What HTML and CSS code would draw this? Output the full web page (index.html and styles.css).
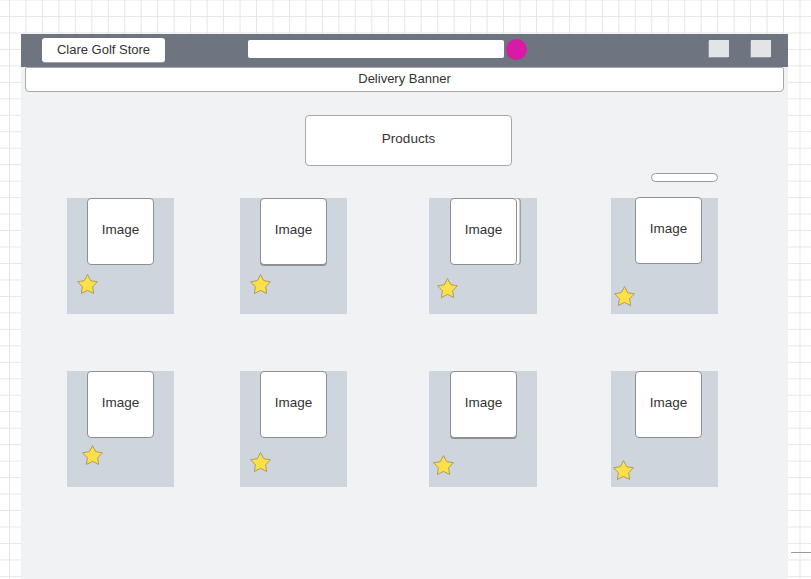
FILE: index.html
```html
<!DOCTYPE html>
<html lang="en">
<head>
<meta charset="utf-8">
<title>Clare Golf Store</title>
<link rel="stylesheet" href="styles.css">
</head>
<body>
<div class="frame">
  <header class="header">
    <div class="store">Clare Golf Store</div>
    <div class="search"></div>
    <div class="dot"></div>
    <div class="sq sq1"></div>
    <div class="sq sq2"></div>
  </header>
  <div class="banner">Delivery Banner</div>
  <div class="products">Products</div>
  <div class="pill"></div>

  <div class="row row1">
    <div class="card c1">
      <div class="img i1">Image</div>
      <svg class="star s11" viewBox="0 0 24 24"><polygon points="12,2.5 15.06,8.29 21.51,9.41 16.95,14.11 17.88,20.59 12,17.7 6.12,20.59 7.05,14.11 2.49,9.41 8.94,8.29"/></svg>
    </div>
    <div class="card c2">
      <div class="img i2 shade">Image</div>
      <svg class="star s12" viewBox="0 0 24 24"><polygon points="12,2.5 15.06,8.29 21.51,9.41 16.95,14.11 17.88,20.59 12,17.7 6.12,20.59 7.05,14.11 2.49,9.41 8.94,8.29"/></svg>
    </div>
    <div class="card c3">
      <div class="img i3 stacked">Image</div>
      <svg class="star s13" viewBox="0 0 24 24"><polygon points="12,2.5 15.06,8.29 21.51,9.41 16.95,14.11 17.88,20.59 12,17.7 6.12,20.59 7.05,14.11 2.49,9.41 8.94,8.29"/></svg>
    </div>
    <div class="card c4">
      <div class="img i4 up">Image</div>
      <svg class="star s14" viewBox="0 0 24 24"><polygon points="12,2.5 15.06,8.29 21.51,9.41 16.95,14.11 17.88,20.59 12,17.7 6.12,20.59 7.05,14.11 2.49,9.41 8.94,8.29"/></svg>
    </div>
  </div>

  <div class="row row2">
    <div class="card c1">
      <div class="img i1">Image</div>
      <svg class="star s21" viewBox="0 0 24 24"><polygon points="12,2.5 15.06,8.29 21.51,9.41 16.95,14.11 17.88,20.59 12,17.7 6.12,20.59 7.05,14.11 2.49,9.41 8.94,8.29"/></svg>
    </div>
    <div class="card c2">
      <div class="img i2">Image</div>
      <svg class="star s22" viewBox="0 0 24 24"><polygon points="12,2.5 15.06,8.29 21.51,9.41 16.95,14.11 17.88,20.59 12,17.7 6.12,20.59 7.05,14.11 2.49,9.41 8.94,8.29"/></svg>
    </div>
    <div class="card c3">
      <div class="img i3 shade">Image</div>
      <svg class="star s23" viewBox="0 0 24 24"><polygon points="12,2.5 15.06,8.29 21.51,9.41 16.95,14.11 17.88,20.59 12,17.7 6.12,20.59 7.05,14.11 2.49,9.41 8.94,8.29"/></svg>
    </div>
    <div class="card c4">
      <div class="img i4">Image</div>
      <svg class="star s24" viewBox="0 0 24 24"><polygon points="12,2.5 15.06,8.29 21.51,9.41 16.95,14.11 17.88,20.59 12,17.7 6.12,20.59 7.05,14.11 2.49,9.41 8.94,8.29"/></svg>
    </div>
  </div>
</div>
<div class="stray-line"></div>
</body>
</html>
```
FILE: styles.css
```css
html, body {
  margin: 0;
  padding: 0;
}
body {
  width: 811px;
  height: 579px;
  overflow: hidden;
  position: relative;
  font-family: "Liberation Sans", Arial, sans-serif;
  color: #333;
  background-color: #ffffff;
  background-image:
    linear-gradient(to right, #e6e6e6 1px, transparent 1px),
    linear-gradient(to bottom, #e6e6e6 1px, transparent 1px);
  background-size: 16.48px 16.48px;
  background-position: 9px -0.5px;
}
.frame {
  margin: 34px 0 0 21px;
  width: 767px;
  height: 545px;
  background: #f1f2f4;
}
.header {
  height: 33px;
  background: #6e7480;
  display: flex;
  align-items: flex-start;
}
.store {
  margin: 4px 0 0 21px;
  width: 123px;
  height: 24px;
  box-sizing: border-box;
  background: #fff;
  border-radius: 3px;
  box-shadow: 0 1px 0 #9ca0a8;
  font-size: 13px;
  line-height: 23px;
  text-align: center;
}
.search {
  margin: 6px 0 0 83px;
  width: 256px;
  height: 18px;
  background: #fff;
  border-radius: 2px;
}
.dot {
  margin: 5px 0 0 2px;
  width: 21px;
  height: 21px;
  border-radius: 50%;
  background: #d81ba6;
}
.sq {
  margin-top: 6px;
  width: 20px;
  height: 17px;
  background: #e2e4e8;
  box-shadow: -1px 1px 0 #8d929b;
}
.sq1 { margin-left: 182px; }
.sq2 { margin-left: 22px; }
.banner {
  margin: 0 4px;
  height: 25px;
  box-sizing: border-box;
  background: #fff;
  border: 1px solid #a9a9a9;
  border-radius: 2px 2px 4px 4px;
  font-size: 13px;
  line-height: 21px;
  text-align: center;
}
.products {
  margin: 23px 0 0 284px;
  width: 207px;
  height: 51px;
  box-sizing: border-box;
  background: #fff;
  border: 1px solid #a9a9a9;
  border-radius: 4px;
  font-size: 13.5px;
  line-height: 45px;
  text-align: center;
}
.pill {
  margin: 7px 0 0 630px;
  width: 67px;
  height: 9px;
  box-sizing: border-box;
  background: #fff;
  border: 1px solid #999;
  border-radius: 5px;
}
.row {
  display: flex;
  align-items: flex-start;
}
.row1 { margin-top: 16px; }
.row2 { margin-top: 57px; }
.card {
  width: 107px;
  height: 116px;
  background: #cfd5dd;
  display: flex;
  flex-direction: column;
  align-items: flex-start;
}
.c1 { margin-left: 46px; }
.c2 { margin-left: 66px; }
.c3 { margin-left: 82px; width: 108px; }
.c4 { margin-left: 74px; }
.img {
  width: 67px;
  height: 67px;
  box-sizing: border-box;
  background: #fff;
  border: 1px solid #8f8f8f;
  border-radius: 4px;
  font-size: 13.5px;
  line-height: 61px;
  text-align: center;
  color: #333;
}
.i1 { margin-left: 20px; }
.i2 { margin-left: 20px; }
.i3 { margin-left: 21px; }
.i4 { margin-left: 24px; }
.up { margin-top: -1px; }
.shade { box-shadow: 0 1px 0 #8f8f8f; }
.stacked {
  box-shadow: 3px 0 0 -0.5px #fff, 4px 0 0 0 #a0a0a0;
}
.star {
  width: 25px;
  height: 25px;
  display: block;
}
.star polygon {
  fill: #fde047;
  stroke: #a8975a;
  stroke-width: 0.9;
  stroke-linejoin: round;
}
.s11 { margin: 6.5px 0 0 7.5px; }
.s12 { margin: 6.5px 0 0 7.5px; }
.s13 { margin: 10.5px 0 0 6px; }
.s14 { margin: 19.5px 0 0 0.5px; }
.s21 { margin: 4.5px 0 0 13px; }
.s22 { margin: 11.5px 0 0 7.5px; }
.s23 { margin: 14.5px 0 0 1.5px; }
.s24 { margin: 19.5px 0 0 -0.5px; }
.stray-line {
  position: absolute;
  left: 791px;
  top: 552px;
  width: 20px;
  height: 1px;
  background: #9a9a9a;
}
```
